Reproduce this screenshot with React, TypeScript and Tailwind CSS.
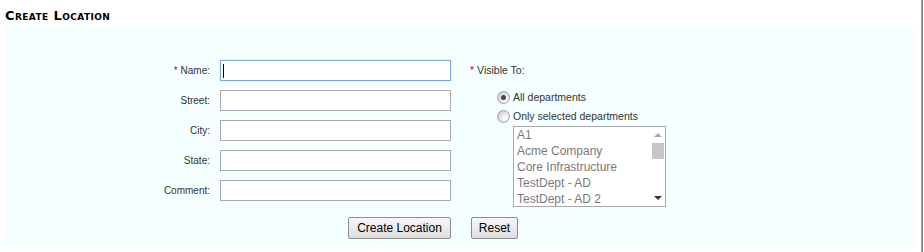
import React from "react";

const labelCls = "w-[60px] text-right text-[10px] text-[#333]";
const inputCls = "ml-[10px] w-[231px] h-[21px] bg-white border border-[#a9a9a9]";

const departments = ["A1", "Acme Company", "Core Infrastructure", "TestDept - AD", "TestDept - AD 2"];

const Radio = ({ checked }: { checked?: boolean }) => (
  <span className="w-[13px] h-[13px] rounded-full border border-[#a4a4a4] bg-[radial-gradient(circle_at_65%_65%,#ffffff_0%,#e6e6e6_45%,#bdbdbd_100%)] flex items-center justify-center">
    {checked && <span className="w-[5px] h-[5px] rounded-full bg-[#4a4a4a]" />}
  </span>
);

const FieldRow = ({ label, required, focused }: { label: string; required?: boolean; focused?: boolean }) => (
  <div className="flex items-center h-[21px]">
    <div className={labelCls}>
      {required && <span className="text-[#e00000] mr-[3px]">*</span>}
      {label}
    </div>
    {focused ? (
      <div className="ml-[10px] w-[231px] h-[21px] bg-white border border-[#7fa6de] shadow-[0_0_1px_#a9c5ee] flex items-center pl-[2px]">
        <span className="w-[1px] h-[14px] bg-black" />
      </div>
    ) : (
      <div className={inputCls} />
    )}
  </div>
);

export default function App() {
  return (
    <div className="w-[924px] h-[252px] bg-white flex font-['Liberation_Sans',Arial,sans-serif]">
      <div className="w-[921px] pl-[5px]">
        {/* title */}
        <div className="h-[26px] pt-[9px] text-[13px] leading-[14px] font-bold [font-variant:small-caps] text-black font-['DejaVu_Sans',Verdana,sans-serif] tracking-[0.4px]">
          Create Location
        </div>

        {/* panel */}
        <div className="w-[909px] h-[221px] bg-[#f5ffff] pt-[34px]">
          <div className="flex ml-[145px]">
            <div className="flex flex-col gap-[9px]">
              <FieldRow label="Name:" required focused />
              <FieldRow label="Street:" />
              <FieldRow label="City:" />
              <FieldRow label="State:" />
              <FieldRow label="Comment:" />
            </div>

            <div className="ml-[19px] flex flex-col">
              <div className="h-[21px] flex items-center text-[10.5px] text-[#333]">
                <span className="text-[#e00000] mr-[3px]">*</span>Visible To:
              </div>
              <div className="mt-[7px] pl-[27px] flex flex-col text-[10.5px] text-[#333]">
                <div className="h-[19px] flex items-center gap-[3px]">
                  <Radio checked />
                  <span>All departments</span>
                </div>
                <div className="h-[19px] flex items-center gap-[3px]">
                  <Radio />
                  <span>Only selected departments</span>
                </div>
              </div>
              <div className="ml-[43px] w-[153px] h-[81px] bg-white border border-[#a9a9a9] flex">
                <div className="flex-1 pl-[3px] text-[12px] text-[#7a7a7a]">
                  {departments.map((d) => (
                    <div key={d} className="h-[16px] leading-[16px] whitespace-nowrap">
                      {d}
                    </div>
                  ))}
                </div>
                <div className="w-[15px] flex flex-col items-center">
                  <div className="h-[16px] flex items-center justify-center">
                    <span className="border-x-[4px] border-x-transparent border-b-[4px] border-b-[#a8a8a8]" />
                  </div>
                  <div className="w-[12px] h-[16px] bg-[#c6c6c6]" />
                  <div className="flex-1" />
                  <div className="h-[16px] flex items-center justify-center">
                    <span className="border-x-[4px] border-x-transparent border-t-[4px] border-t-[#333]" />
                  </div>
                </div>
              </div>
            </div>
          </div>

          {/* buttons */}
          <div className="flex ml-[145px] mt-[10px]">
            <div className="w-[301px] flex justify-end">
              <button className="w-[103px] h-[22px] text-[12px] text-black border border-[#8c8c8c] rounded-[2px] bg-gradient-to-b from-[#f7f7f7] to-[#dedede]">
                Create Location
              </button>
            </div>
            <button className="ml-[20px] w-[47px] h-[22px] text-[12px] text-black border border-[#8c8c8c] rounded-[2px] bg-gradient-to-b from-[#f7f7f7] to-[#dedede]">
              Reset
            </button>
          </div>
        </div>
      </div>
      <div className="w-[2px] h-full bg-[#a0a0a0] border-r border-[#888]" />
    </div>
  );
}
